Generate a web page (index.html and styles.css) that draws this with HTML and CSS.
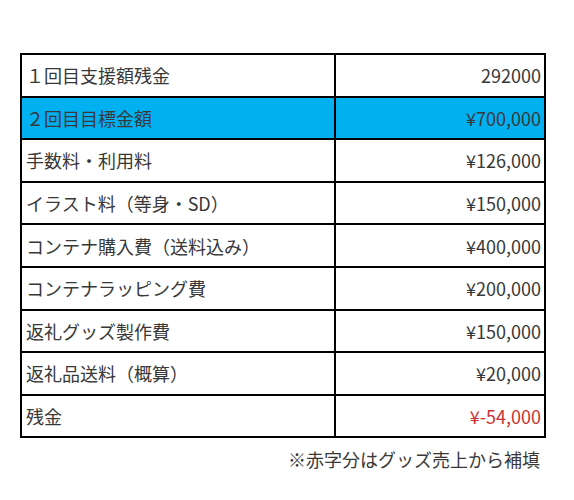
FILE: index.html
```html
<!DOCTYPE html>
<html lang="ja">
<head>
  <meta charset="UTF-8">
  <title>支援額内訳</title>
  <link rel="stylesheet" href="styles.css">
</head>
<body>
  <section class="sheet">
    <table class="budget">
      <tr><td class="label">１回目支援額残金</td><td class="amount">292000</td></tr>
      <tr class="goal"><td class="label">２回目目標金額</td><td class="amount">¥700,000</td></tr>
      <tr><td class="label">手数料・利用料</td><td class="amount">¥126,000</td></tr>
      <tr><td class="label">イラスト料（等身・SD）</td><td class="amount">¥150,000</td></tr>
      <tr><td class="label">コンテナ購入費（送料込み）</td><td class="amount">¥400,000</td></tr>
      <tr><td class="label">コンテナラッピング費</td><td class="amount">¥200,000</td></tr>
      <tr><td class="label">返礼グッズ製作費</td><td class="amount">¥150,000</td></tr>
      <tr><td class="label">返礼品送料（概算）</td><td class="amount">¥20,000</td></tr>
      <tr><td class="label">残金</td><td class="amount minus">¥-54,000</td></tr>
    </table>
    <p class="note">※赤字分はグッズ売上から補填</p>
  </section>
</body>
</html>
```

FILE: styles.css
```css
body {
  margin: 0;
  background: #fff;
  font-family: "Noto Sans CJK JP", "Noto Sans", sans-serif;
  color: #383838;
}
.sheet {
  width: 526px;
  padding: 53px 0 0 20px;
}
.budget {
  width: 526px;
  border-collapse: collapse;
  border: 2px solid #000;
  font-size: 18px;
}
.budget td {
  height: 40.6px;
  padding: 0 3px 0 4px;
  border: 2px solid #000;
  line-height: 1;
}
.budget .label {
  width: 305px;
}
.amount {
  text-align: right;
}
.goal td {
  background: #00b0f0;
}
.minus {
  color: #c83232;
}
.note {
  margin: 10px 6px 0 0;
  text-align: right;
  font-size: 18px;
  line-height: 1.3;
}
```
